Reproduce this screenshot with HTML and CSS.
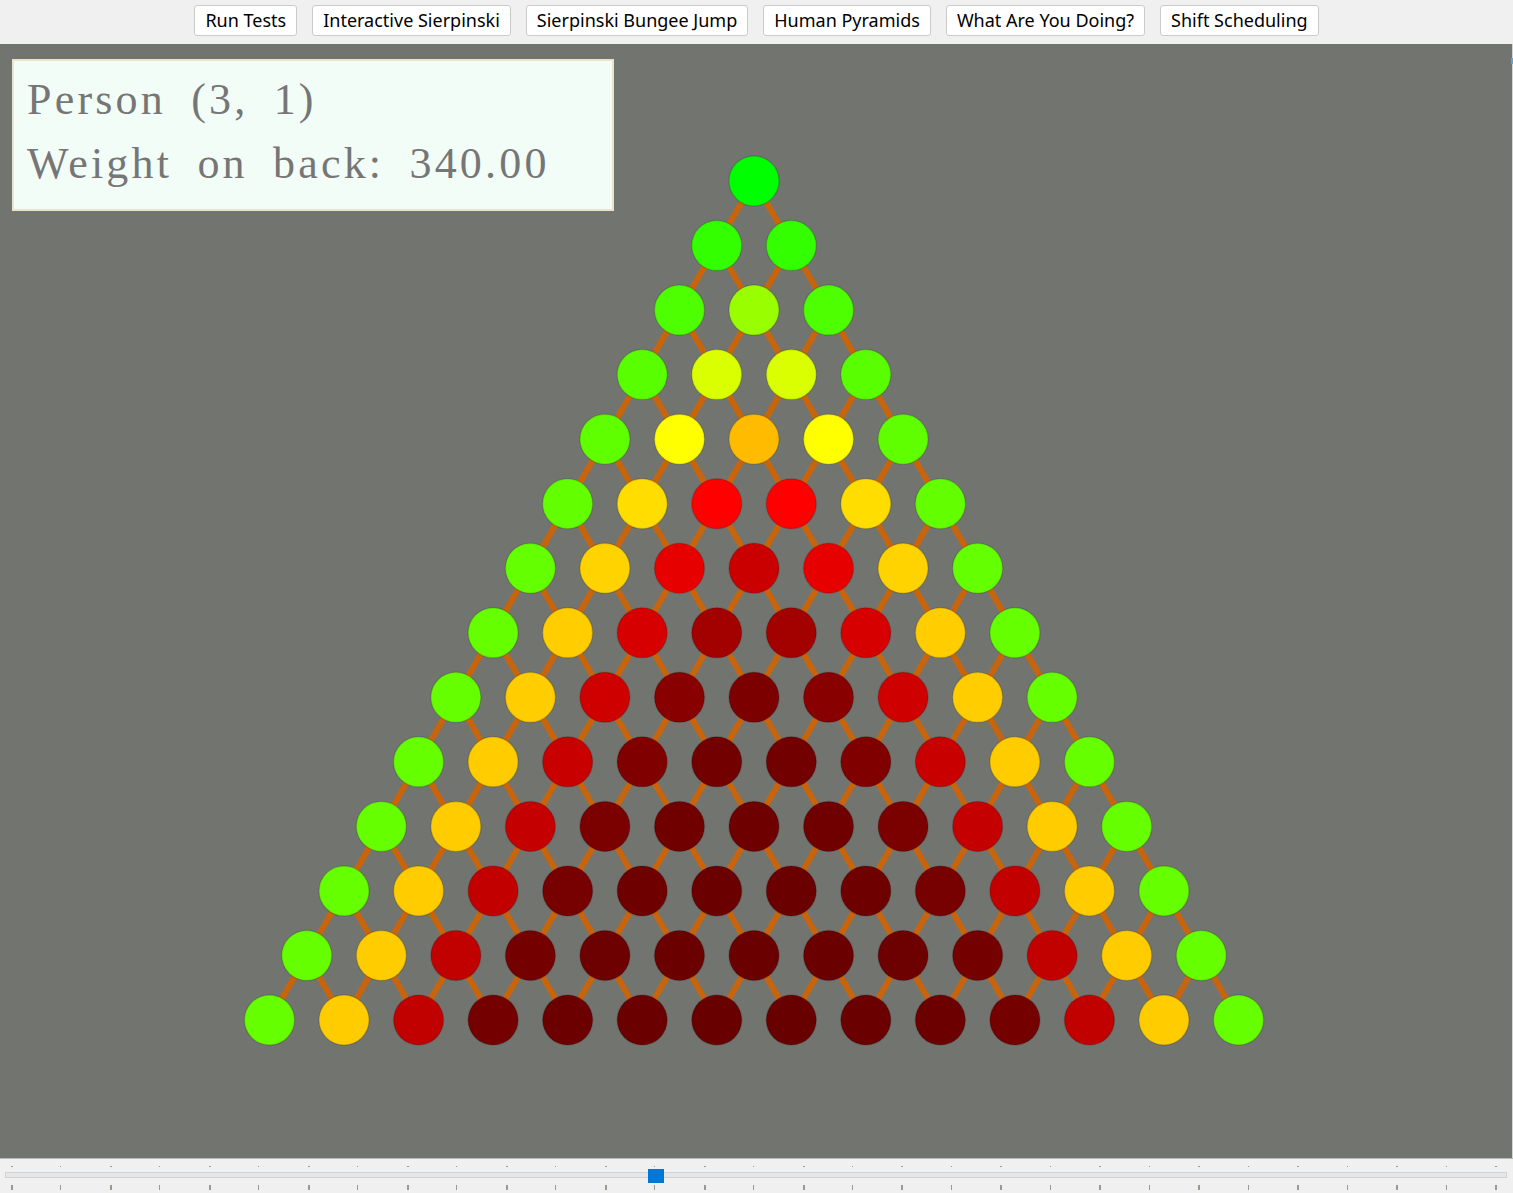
FILE: index.html
```html
<!DOCTYPE html>
<html lang="en">
<head>
<meta charset="utf-8">
<title>Human Pyramids</title>
<link rel="stylesheet" href="styles.css">
</head>
<body>
<div class="app">
  <nav class="toolbar">
    <button class="tb-btn">Run Tests</button>
    <button class="tb-btn">Interactive Sierpinski</button>
    <button class="tb-btn">Sierpinski Bungee Jump</button>
    <button class="tb-btn">Human Pyramids</button>
    <button class="tb-btn">What Are You Doing?</button>
    <button class="tb-btn">Shift Scheduling</button>
  </nav>
  <main class="canvas">
    <svg id="pyramid" class="pyramid" width="1512" height="1114" viewBox="0 0 1512 1114" xmlns="http://www.w3.org/2000/svg">
      <g id="edges"></g>
      <g id="people"></g>
    </svg>
    <div class="info">
      <div class="info-line">Person (3, 1)</div>
      <div class="info-line">Weight on back: 340.00</div>
    </div>
    <span class="edge-mark"></span>
  </main>
  <footer class="slider-panel">
    <div class="ticks ticks-top" id="ticksTop"></div>
    <div class="track">
      <span class="thumb"></span>
    </div>
    <div class="ticks ticks-bottom" id="ticksBottom"></div>
  </footer>
</div>
<script src="script.js"></script>
</body>
</html>
```
FILE: styles.css
```css
* { box-sizing: border-box; }
html, body {
  margin: 0;
  padding: 0;
  width: 1513px;
  height: 1193px;
  overflow: hidden;
  background: #f0f0f0;
}
.app {
  display: flex;
  flex-direction: column;
  width: 1513px;
  height: 1193px;
}
.toolbar {
  height: 44px;
  flex: 0 0 44px;
  display: flex;
  justify-content: center;
  align-items: flex-start;
  gap: 15px;
  padding: 5px 0 0 0;
  background: #f0f0f0;
}
.tb-btn {
  height: 31px;
  padding: 0 10px;
  font-family: "Noto Sans", "Open Sans", sans-serif;
  font-size: 18px;
  color: #000;
  background: #fff;
  border: 1px solid #cbcbcb;
  border-radius: 3px;
  line-height: 29px;
}
.canvas {
  position: relative;
  flex: 0 0 1114px;
  height: 1114px;
  background: #727470;
  border-right: 1px solid #d4d4d4;
}
.pyramid {
  display: block;
}
.info {
  position: absolute;
  left: 12px;
  top: 15px;
  width: 602px;
  height: 152px;
  background: #f3fdf7;
  border: 2px solid #ebe3cd;
  padding: 7px 0 0 13px;
  font-family: "Liberation Serif", "DejaVu Serif", serif;
  font-size: 44px;
  letter-spacing: 3.2px;
  word-spacing: 11px;
  color: #767676;
}
.info-line {
  line-height: 64px;
  height: 64px;
  white-space: nowrap;
}
.edge-mark {
  position: absolute;
  right: -1px;
  top: 14px;
  width: 2px;
  height: 6px;
  background: #58a7d8;
}
.slider-panel {
  position: relative;
  flex: 0 0 35px;
  height: 35px;
  background: #f0f0f0;
  border-top: 1px solid #b9b9b9;
  padding: 0 6px 0 5px;
}
.ticks {
  position: relative;
  height: 5px;
  margin: 0 6px;
}
.ticks-top {
  margin-top: 7px;
  height: 2px;
}
.ticks-bottom {
  margin-top: 7px;
  height: 5px;
}
.tick {
  position: absolute;
  top: 0;
  width: 1px;
  height: 100%;
  background: #9a9a92;
}
.tick.major { width: 2px; }
.ticks-top .tick { height: 1px; }
.track {
  position: relative;
  height: 6px;
  margin-top: 4px;
  background: #e6e7e9;
  border: 1px solid #d2d2d2;
}
.thumb {
  position: absolute;
  left: 642px;
  top: -4px;
  width: 16px;
  height: 14px;
  background: #0078d7;
}
```
FILE: script.js
```js
(function () {
  var NS = "http://www.w3.org/2000/svg";
  var ROWS = 14, W = 160;
  var cx0 = 754, cy0 = 137, dx = 74.54, dy = 64.54, R = 25;

  // weight on back
  var wt = [];
  for (var r = 0; r < ROWS; r++) {
    wt.push([]);
    for (var c = 0; c <= r; c++) {
      if (r === 0) { wt[r][c] = 0; continue; }
      var s = 0;
      if (c - 1 >= 0) s += (W + wt[r - 1][c - 1]) / 2;
      if (c <= r - 1) s += (W + wt[r - 1][c]) / 2;
      wt[r][c] = s;
    }
  }

  function lerpStops(stops, v) {
    if (v <= stops[0][0]) return stops[0][1];
    for (var i = 1; i < stops.length; i++) {
      if (v <= stops[i][0]) {
        var a = stops[i - 1], b = stops[i];
        var t = (v - a[0]) / (b[0] - a[0]);
        return a[1] + (b[1] - a[1]) * t;
      }
    }
    return stops[stops.length - 1][1];
  }
  function color(w) {
    var rr, gg;
    if (w <= 400) {
      rr = 255 * w / 400; gg = 255;
    } else if (w <= 610) {
      rr = 255;
      gg = lerpStops([[400, 255], [435, 221], [466, 205], [480, 204], [500, 187], [610, 0]], w);
    } else {
      gg = 0;
      rr = lerpStops([[610, 255], [967, 136], [1040, 126], [1100, 116], [1400, 108], [2200, 100]], w);
    }
    return "rgb(" + Math.round(rr) + "," + Math.round(gg) + ",0)";
  }
  function pos(r, c) {
    return [cx0 + (c - r / 2) * dx, cy0 + r * dy];
  }

  var edges = document.getElementById("edges");
  var people = document.getElementById("people");
  for (var r2 = 0; r2 < ROWS - 1; r2++) {
    for (var c2 = 0; c2 <= r2; c2++) {
      var p = pos(r2, c2);
      [[r2 + 1, c2], [r2 + 1, c2 + 1]].forEach(function (q) {
        var p2 = pos(q[0], q[1]);
        var ln = document.createElementNS(NS, "line");
        ln.setAttribute("x1", p[0]); ln.setAttribute("y1", p[1]);
        ln.setAttribute("x2", p2[0]); ln.setAttribute("y2", p2[1]);
        ln.setAttribute("stroke", "#c8650c");
        ln.setAttribute("stroke-width", "6");
        edges.appendChild(ln);
      });
    }
  }
  for (var r3 = 0; r3 < ROWS; r3++) {
    for (var c3 = 0; c3 <= r3; c3++) {
      var pp = pos(r3, c3);
      var ci = document.createElementNS(NS, "circle");
      ci.setAttribute("cx", pp[0]); ci.setAttribute("cy", pp[1]);
      ci.setAttribute("r", R);
      ci.setAttribute("fill", color(wt[r3][c3]));
      ci.setAttribute("stroke", "rgba(0,0,0,0.14)");
      ci.setAttribute("stroke-width", "1.5");
      people.appendChild(ci);
    }
  }

  function addTicks(id) {
    var box = document.getElementById(id);
    for (var i = 0; i <= 30; i++) {
      var t = document.createElement("span");
      t.className = "tick" + (i % 2 === 0 ? " major" : "");
      t.style.left = (i * 49.47) + "px";
      box.appendChild(t);
    }
  }
  addTicks("ticksTop");
  addTicks("ticksBottom");
})();
```
